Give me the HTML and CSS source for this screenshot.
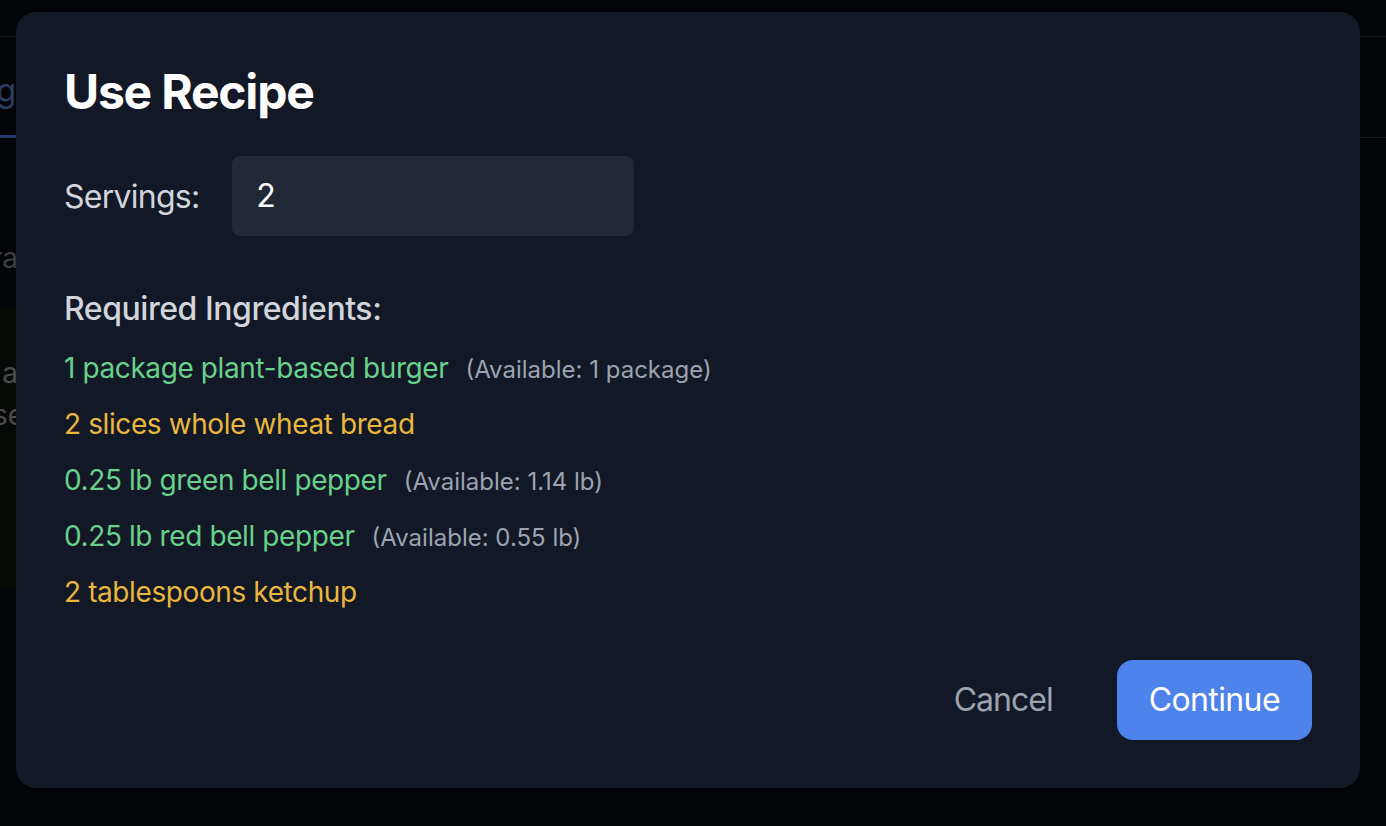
FILE: index.html
```html
<!DOCTYPE html>
<html lang="en">
<head>
<meta charset="utf-8">
<title>Use Recipe</title>
<link rel="stylesheet" href="styles.css">
</head>
<body>
<div class="page">
  <header class="topbar"></header>
  <nav class="tabs">
    <div class="edge"><span class="tab-active">Cooking</span></div>
  </nav>
  <div class="edge meta"><span>Extra</span></div>
  <div class="card">
    <div class="edge card-line"><span>Plant-based burger, a</span></div>
    <div class="edge card-line wide"><span>whole wheat base</span></div>
  </div>
</div>

<div class="backdrop">
  <div class="modal">
    <h2 class="title">Use Recipe</h2>
    <div class="servings">
      <label class="servings-label" for="servings">Servings:</label>
      <div class="servings-input" id="servings">2</div>
    </div>
    <h3 class="section">Required Ingredients:</h3>
    <ul class="ingredients">
      <li class="ok">1 package plant-based burger<span class="avail">(Available: 1 package)</span></li>
      <li class="missing">2 slices whole wheat bread</li>
      <li class="ok">0.25 lb green bell pepper<span class="avail">(Available: 1.14 lb)</span></li>
      <li class="ok">0.25 lb red bell pepper<span class="avail">(Available: 0.55 lb)</span></li>
      <li class="missing">2 tablespoons ketchup</li>
    </ul>
    <div class="actions">
      <button class="btn-cancel" type="button">Cancel</button>
      <button class="btn-continue" type="button">Continue</button>
    </div>
  </div>
</div>
</body>
</html>
```

FILE: styles.css
```css
* { box-sizing: border-box; }

html, body {
  margin: 0;
  padding: 0;
  height: 100%;
}

body {
  background: #030407;
  font-family: Inter, "Noto Sans", "Liberation Sans", sans-serif;
  overflow: hidden;
}

/* ---------- dimmed page behind the dialog ---------- */
.page {
  width: 100%;
}

.topbar {
  height: 37px;
  border-bottom: 1px solid #15171c;
}

.tabs {
  height: 101px;
  border-bottom: 1px solid #15171c;
  display: flex;
  align-items: flex-end;
}

.edge {
  width: 18px;
  display: flex;
  justify-content: flex-end;
  white-space: nowrap;
}

.tab-active {
  display: block;
  font-size: 32px;
  line-height: 48px;
  color: #2b3d63;
  padding-bottom: 20px;
  border-bottom: 3px solid #26386a;
  margin-bottom: -1px;
  padding-right: 2px;
}

.meta {
  margin-top: 100px;
  font-size: 28px;
  line-height: 40px;
  color: #3c3d42;
}

.card {
  margin-top: 30px;
  height: 280px;
  width: 60px;
  background: #070907;
  padding-top: 44px;
}

.card-line {
  font-size: 28px;
  line-height: 42px;
  color: #4a4b4d;
}

.card-line.wide {
  width: 24px;
}

/* ---------- dialog ---------- */
.backdrop {
  position: fixed;
  inset: 0;
}

.modal {
  position: absolute;
  left: 16px;
  top: 12px;
  width: 1344px;
  height: 776px;
  background: #131826;
  border-radius: 20px;
  padding: 48px;
  display: flex;
  flex-direction: column;
}

.title {
  margin: 0 0 32px;
  font-size: 48px;
  line-height: 64px;
  font-weight: 700;
  color: #ffffff;
  letter-spacing: -1.2px;
}

.servings {
  display: flex;
  align-items: center;
  gap: 33px;
  margin-bottom: 48px;
}

.servings-label {
  font-size: 32px;
  line-height: 48px;
  padding-top: 2px;
  color: #d1d5db;
  letter-spacing: -0.75px;
}

.servings-input {
  width: 402px;
  height: 80px;
  padding: 16px 24px;
  background: #222836;
  border-radius: 8px;
  font-size: 32px;
  line-height: 48px;
  color: #ffffff;
}

.section {
  margin: 0 0 16px;
  font-size: 32px;
  line-height: 48px;
  font-weight: 500;
  color: #d1d5db;
  letter-spacing: -0.45px;
  padding-top: 1px;
  height: 48px;
}

.ingredients {
  list-style: none;
  margin: 0;
  padding: 0;
  display: flex;
  flex-direction: column;
  gap: 16px;
}

.ingredients li {
  font-size: 28px;
  line-height: 40px;
  height: 40px;
  letter-spacing: -0.4px;
}

.ok { color: #68d18c; }
.missing { color: #e8b73d; }

.avail {
  margin-left: 17px;
  font-size: 24px;
  line-height: 24px;
  letter-spacing: 0;
  color: #9ca3af;
}

.actions {
  margin-top: 48px;
  display: flex;
  justify-content: flex-end;
  gap: 32px;
}

.btn-cancel,
.btn-continue {
  font-family: inherit;
  font-size: 32px;
  line-height: 48px;
  height: 80px;
  padding: 0 32px;
  border: 0;
  border-radius: 16px;
  cursor: pointer;
}

.btn-cancel {
  background: transparent;
  color: #9ca3af;
  letter-spacing: -1px;
}

.btn-continue {
  background: #4f83ec;
  color: #ffffff;
  letter-spacing: -0.6px;
}
```
